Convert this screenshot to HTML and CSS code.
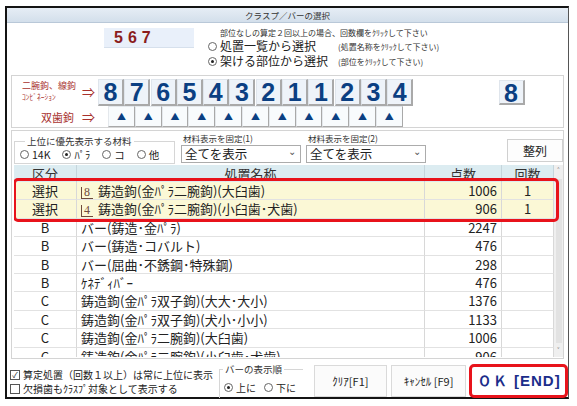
FILE: index.html
```html
<!DOCTYPE html>
<html>
<head>
    <meta charset="UTF-8">
    <title>クラスプ／バーの選択</title>
    <link rel="stylesheet" href="styles.css">
</head>
<body>
    <div class="window">
        <div class="titlebar">クラスプ／バーの選択</div>

        <div class="top">
            <div class="tooth-code">567</div>
            <div class="mode">
                <div class="note">部位なしの算定２回以上の場合、回数欄をｸﾘｯｸして下さい</div>
                <div class="mode-row">
                    <span class="radio"></span>
                    <span class="mode-label">処置一覧から選択</span>
                    <span class="hint">(処置名称をｸﾘｯｸして下さい)</span>
                </div>
                <div class="mode-row">
                    <span class="radio on"></span>
                    <span class="mode-label">架ける部位から選択</span>
                    <span class="hint">(部位をｸﾘｯｸして下さい)</span>
                </div>
            </div>
        </div>

        <div class="teeth">
            <div class="teeth-row">
                <div class="row-label">
                    <div class="combo">
                        <div>二腕鉤、線鉤</div>
                        <div class="combo-sub">ｺﾝﾋﾞﾈｰｼｮﾝ</div>
                    </div>
                    <span class="arrow">⇒</span>
                </div>
                <div class="nums">
                    <button class="num">8</button>
                    <button class="num">7</button>
                    <button class="num">6</button>
                    <button class="num">5</button>
                    <button class="num">4</button>
                    <button class="num">3</button>
                    <button class="num">2</button>
                    <button class="num">1</button>
                    <button class="num">1</button>
                    <button class="num">2</button>
                    <button class="num">3</button>
                    <button class="num">4</button>
                </div>
                <button class="num single">8</button>
            </div>
            <div class="teeth-row">
                <div class="row-label">
                    <span class="twin">双歯鉤</span>
                    <span class="arrow">⇒</span>
                </div>
                <div class="tris">
                    <button class="tri">▲</button>
                    <button class="tri">▲</button>
                    <button class="tri">▲</button>
                    <button class="tri">▲</button>
                    <button class="tri">▲</button>
                    <button class="tri">▲</button>
                    <button class="tri">▲</button>
                    <button class="tri">▲</button>
                    <button class="tri">▲</button>
                    <button class="tri">▲</button>
                    <button class="tri">▲</button>
                </div>
            </div>
        </div>

        <div class="lower">
            <div class="filters">
                <div class="group material">
                    <div class="legend">上位に優先表示する材料</div>
                    <div class="radios">
                        <span class="opt"><span class="radio"></span>14K</span>
                        <span class="opt"><span class="radio on"></span>ﾊﾟﾗ</span>
                        <span class="opt"><span class="radio"></span>コ</span>
                        <span class="opt"><span class="radio"></span>他</span>
                    </div>
                </div>
                <div class="fixed">
                    <div class="fixed-label">材料表示を固定(1)</div>
                    <div class="select">全てを表示<span class="chev">⌄</span></div>
                </div>
                <div class="fixed">
                    <div class="fixed-label">材料表示を固定(2)</div>
                    <div class="select">全てを表示<span class="chev">⌄</span></div>
                </div>
                <button class="sort">整列</button>
            </div>

            <div class="table-wrap">
                <div class="grid">
                    <div class="th">区分</div>
                    <div class="th">処置名称</div>
                    <div class="th">点数</div>
                    <div class="th">回数</div>

                    <div class="td c hl">選択</div>
                    <div class="td hl"><span class="quad">8</span>鋳造鉤(金ﾊﾟﾗ二腕鉤)(大臼歯)</div>
                    <div class="td r hl">1006</div>
                    <div class="td c hl">1</div>

                    <div class="td c hl">選択</div>
                    <div class="td hl"><span class="quad">4</span>鋳造鉤(金ﾊﾟﾗ二腕鉤)(小臼歯･犬歯)</div>
                    <div class="td r hl">906</div>
                    <div class="td c hl">1</div>

                    <div class="td c">B</div>
                    <div class="td">バー(鋳造･金ﾊﾟﾗ)</div>
                    <div class="td r">2247</div>
                    <div class="td c"></div>

                    <div class="td c">B</div>
                    <div class="td">バー(鋳造･コバルト)</div>
                    <div class="td r">476</div>
                    <div class="td c"></div>

                    <div class="td c">B</div>
                    <div class="td">バー(屈曲･不銹鋼･特殊鋼)</div>
                    <div class="td r">298</div>
                    <div class="td c"></div>

                    <div class="td c">B</div>
                    <div class="td">ｹﾈﾃﾞｨﾊﾞｰ</div>
                    <div class="td r">476</div>
                    <div class="td c"></div>

                    <div class="td c">C</div>
                    <div class="td">鋳造鉤(金ﾊﾟﾗ双子鉤)(大大･大小)</div>
                    <div class="td r">1376</div>
                    <div class="td c"></div>

                    <div class="td c">C</div>
                    <div class="td">鋳造鉤(金ﾊﾟﾗ双子鉤)(犬小･小小)</div>
                    <div class="td r">1133</div>
                    <div class="td c"></div>

                    <div class="td c">C</div>
                    <div class="td">鋳造鉤(金ﾊﾟﾗ二腕鉤)(大臼歯)</div>
                    <div class="td r">1006</div>
                    <div class="td c"></div>

                    <div class="td c">C</div>
                    <div class="td">鋳造鉤(金ﾊﾟﾗ二腕鉤)(小臼歯･犬歯)</div>
                    <div class="td r">906</div>
                    <div class="td c"></div>
                </div>
                <div class="scrollbar">
                    <span class="sb-arrow">˄</span>
                    <span class="sb-thumb"></span>
                    <span class="sb-arrow">˅</span>
                </div>
                <div class="callout"></div>
            </div>
        </div>

        <div class="bottom">
            <div class="checks">
                <div class="check"><span class="box on">✓</span>算定処置（回数１以上）は常に上位に表示</div>
                <div class="check"><span class="box"></span>欠損歯もｸﾗｽﾌﾟ対象として表示する</div>
            </div>
            <div class="group order">
                <div class="legend">バーの表示順</div>
                <div class="radios">
                    <span class="opt"><span class="radio on"></span>上に</span>
                    <span class="opt"><span class="radio"></span>下に</span>
                </div>
            </div>
            <button class="action">ｸﾘｱ[F1]</button>
            <button class="action">ｷｬﾝｾﾙ [F9]</button>
            <button class="ok">ＯＫ [END]</button>
        </div>
    </div>
</body>
</html>
```

FILE: styles.css
```css
body {
    margin: 0;
    background: #fff;
    font-family: "Noto Sans CJK JP", "Noto Sans", sans-serif;
    color: #222;
}
button {
    font-family: inherit;
    padding: 0;
    margin: 0;
    cursor: pointer;
}
.window {
    margin: 6px 0 0 5px;
    width: 561px;
    height: 389px;
    border: 2px solid #141414;
    border-right: 1px solid #555;
    background: #fff;
}
.titlebar {
    height: 14px;
    line-height: 14px;
    text-align: center;
    font-size: 8.5px;
    color: #333;
    background: linear-gradient(#e6edf5, #d3dfeb);
    border-bottom: 1px solid #b9c8d8;
}

/* top area */
.top {
    display: flex;
    height: 52px;
}
.tooth-code {
    margin: 5px 0 0 97px;
    width: 90px;
    height: 20px;
    background: #e9f0fa;
    border-bottom: 1px solid #d6e0ec;
    color: #8b1d1d;
    font-family: "Liberation Sans", Arial, sans-serif;
    font-weight: bold;
    font-size: 16px;
    letter-spacing: 5px;
    line-height: 20px;
    padding-left: 10px;
    box-sizing: border-box;
}
.mode {
    margin-left: 14px;
    padding-top: 5px;
}
.note {
    font-size: 8px;
    margin-left: 12px;
    height: 10px;
    line-height: 10px;
    color: #333;
}
.mode-row {
    display: flex;
    align-items: center;
    height: 14px;
    margin-top: 1px;
}
.mode-label {
    width: 118px;
    font-size: 12px;
    line-height: 14px;
}
.hint {
    font-size: 8px;
    color: #333;
}
.radio {
    display: inline-block;
    width: 9px;
    height: 9px;
    border: 1px solid #666;
    border-radius: 50%;
    margin-right: 3px;
    box-sizing: border-box;
    position: relative;
    flex: none;
}
.radio.on::after {
    content: "";
    position: absolute;
    left: 2px;
    top: 2px;
    width: 3px;
    height: 3px;
    border-radius: 50%;
    background: #222;
}

/* teeth buttons */
.teeth {
    margin: 0 4px;
    height: 51px;
    border: 1px solid #d4d4d4;
}
.teeth-row {
    display: flex;
    align-items: center;
}
.row-label {
    width: 86px;
    display: flex;
    align-items: center;
    justify-content: flex-end;
    color: #a8322e;
    flex: none;
}
.combo {
    font-size: 9px;
    line-height: 11px;
    margin-right: 6px;
}
.combo-sub {
    font-size: 7.5px;
}
.twin {
    font-size: 11px;
    margin-right: 8px;
}
.arrow {
    font-size: 13px;
    width: 16px;
    color: #a8322e;
}
.nums {
    display: flex;
    margin-top: 3px;
}
.num {
    width: 26px;
    height: 27px;
    margin-right: 0.3px;
    background: #eef3f9;
    border: 1px solid #dfe5ec;
    border-right: 2px solid #a9a9a9;
    border-bottom: 2px solid #a9a9a9;
    color: #0b3f82;
    font-family: "Liberation Sans", Arial, sans-serif;
    font-weight: bold;
    font-size: 25px;
    line-height: 24px;
}
.num.single {
    margin: 3px 0 0 85px;
    height: 25px;
}
.tris {
    display: flex;
    margin-left: 10px;
}
.tri {
    width: 26.8px;
    height: 21px;
    background: #f8fbfd;
    border: 1px solid #e4e8ec;
    border-right: 1px solid #a9a9a9;
    border-bottom: 1px solid #a9a9a9;
    color: #0b3f82;
    font-size: 9px;
    line-height: 19px;
}

/* lower group */
.lower {
    margin: 2px 4px 0;
    height: 227px;
    border: 1px solid #d4d4d4;
    padding-left: 2px;
}
.filters {
    display: flex;
    height: 34px;
}
.group {
    border: 1px solid #d6d6d6;
    position: relative;
}
.legend {
    position: absolute;
    top: -6px;
    left: 10px;
    background: #fff;
    padding: 0 2px;
    font-size: 9.5px;
    line-height: 11px;
    color: #333;
    white-space: nowrap;
}
.radios {
    display: flex;
    align-items: center;
    font-size: 10.5px;
    white-space: nowrap;
}
.opt {
    display: flex;
    align-items: center;
}
.material {
    margin-top: 10px;
    width: 161px;
    height: 23px;
    box-sizing: border-box;
}
.material .radios {
    padding: 6px 0 0 5px;
    line-height: 13px;
}
.material .opt {
    margin-right: 12px;
}
.fixed {
    margin-left: 6px;
}
.fixed + .fixed {
    margin-left: 5px;
}
.fixed-label {
    font-size: 8.5px;
    line-height: 10px;
    margin: 2px 0 2px 2px;
    color: #333;
}
.select {
    width: 120px;
    height: 18px;
    border: 1px solid #acacac;
    box-sizing: border-box;
    font-size: 12.5px;
    line-height: 16px;
    padding-left: 3px;
    position: relative;
}
.chev {
    position: absolute;
    right: 4px;
    top: -3px;
    font-size: 10px;
    color: #555;
}
.sort {
    margin: 8px 0 0 auto;
    width: 56px;
    height: 23px;
    background: #fdfdfd;
    border: 1px solid #d0d0d0;
    font-size: 12px;
    color: #222;
}

/* table */
.table-wrap {
    display: flex;
    height: 192px;
    overflow: hidden;
    position: relative;
}
.grid {
    display: grid;
    grid-template-columns: 63px 348px 77px 52px;
    grid-auto-rows: 18.4px;
    grid-template-rows: 17px;
    font-size: 13px;
}
.th {
    background: #dcecf1;
    border-right: 1px solid #c5d5dc;
    text-align: center;
    line-height: 17px;
    font-size: 13px;
    color: #333;
}
.td {
    border-right: 1px solid #d8d8d8;
    border-bottom: 1px solid #e2e2e2;
    line-height: 18px;
    padding-left: 4px;
    white-space: nowrap;
    overflow: hidden;
    color: #222;
}
.td.c {
    text-align: center;
    padding-left: 0;
}
.td.r {
    text-align: right;
    padding: 0 4px 0 0;
}
.td.hl {
    background: #fbf8d6;
}
.quad {
    display: inline-block;
    font-family: "Liberation Serif", serif;
    font-size: 12px;
    line-height: 11px;
    color: #6e4a3c;
    border-left: 1px solid #6e4a3c;
    border-bottom: 1px solid #6e4a3c;
    padding: 0 3px 0 2px;
    margin-right: 5px;
}
.scrollbar {
    width: 9px;
    background: #efefef;
    display: flex;
    flex-direction: column;
    align-items: center;
    font-size: 8px;
    color: #666;
}
.sb-arrow {
    height: 12px;
    line-height: 12px;
}
.sb-thumb {
    flex: 1;
    width: 6px;
    margin: 2px 0;
    background: #e2e2e2;
}
.callout {
    position: absolute;
    left: -1px;
    top: 13px;
    width: 546px;
    height: 44px;
    border: 3px solid #e8131b;
    border-radius: 5px;
    box-sizing: border-box;
}

/* bottom bar */
.bottom {
    display: flex;
    height: 38px;
}
.checks {
    padding: 9px 0 0 3px;
    width: 210px;
}
.check {
    display: flex;
    align-items: center;
    font-size: 10px;
    line-height: 14px;
    white-space: nowrap;
}
.box {
    display: inline-block;
    width: 8px;
    height: 8px;
    border: 1px solid #555;
    margin-right: 3px;
    font-size: 8px;
    line-height: 8px;
    text-align: center;
}
.order {
    margin-top: 10px;
    width: 84px;
    height: 29px;
    border-right: none;
    border-bottom: none;
    box-sizing: border-box;
}
.order .legend {
    left: 3px;
    font-size: 9.5px;
}
.order .radios {
    padding: 10px 0 0 4px;
    font-size: 10px;
}
.order .opt {
    margin-right: 8px;
}
.action {
    margin: 6px 0 0 11px;
    width: 73px;
    height: 32px;
    background: #fbfbfb;
    border: 1px solid #dadada;
    font-size: 11px;
    color: #222;
}
.action + .action {
    margin-left: 4px;
    width: 76px;
}
.ok {
    margin: 5px 0 0 3px;
    width: 99px;
    height: 34px;
    border: 3px solid #e8131b;
    border-radius: 5px;
    background: #fff;
    font-family: "Liberation Sans", Arial, sans-serif;
    font-weight: bold;
    font-size: 15px;
    color: #1b2d8a;
    letter-spacing: 1px;
}
```
